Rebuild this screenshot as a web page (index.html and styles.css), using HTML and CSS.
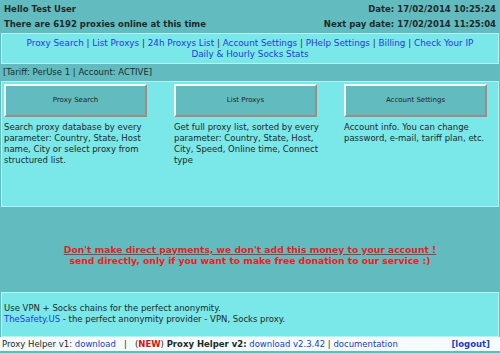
FILE: index.html
```html
<!DOCTYPE html>
<html lang="en">
<head>
    <meta charset="UTF-8">
    <title>Proxy Helper - Members Area</title>
    <link rel="stylesheet" href="styles.css">
</head>
<body>
    <div class="top">
        <div class="top-row">
            <b>Hello Test User</b>
            <b>Date: 17/02/2014 10:25:24</b>
        </div>
        <div class="top-row">
            <b>There are 6192 proxies online at this time</b>
            <b>Next pay date: 17/02/2014 11:25:04</b>
        </div>
    </div>

    <!-- Menu -->
    <div class="box menu">
        <a href="#">Proxy Search</a> | <a href="#">List Proxys</a> | <a href="#">24h Proxys List</a> | <a href="#">Account Settings</a> | <a href="#">PHelp Settings</a> | <a href="#">Billing</a> | <a href="#">Check Your IP</a><br>
        <a href="#">Daily &amp; Hourly Socks Stats</a>
    </div>

    <div class="tariff">[Tariff: PerUse 1 | Account: ACTIVE]</div>

    <!-- Main tools -->
    <div class="box tools">
        <div class="tool">
            <button class="tool-btn">Proxy Search</button>
            <p>Search proxy database by every parameter: Country, State, Host name, City or select proxy from structured list.</p>
        </div>
        <div class="tool">
            <button class="tool-btn">List Proxys</button>
            <p>Get full proxy list, sorted by every parameter: Country, State, Host, City, Speed, Online time, Connect type</p>
        </div>
        <div class="tool">
            <button class="tool-btn">Account Settings</button>
            <p>Account info. You can change password, e-mail, tariff plan, etc.</p>
        </div>
    </div>

    <div class="notice">
        <u>Don't make direct payments, we don't add this money to your account !</u><br>
        send directly, only if you want to make free donation to our service :)
    </div>

    <div class="box promo">
        Use VPN + Socks chains for the perfect anonymity.<br>
        <a href="#">TheSafety.US</a> - the perfect anonymity provider - VPN, Socks proxy.
    </div>

    <div class="footer">
        <div>
            Proxy Helper v1: <a href="#">download</a> &nbsp;&nbsp;|&nbsp;&nbsp; (<span class="new">NEW</span>) <b>Proxy Helper v2:</b> <a href="#">download v2.3.42</a> | <a href="#">documentation</a>
        </div>
        <a href="#" class="logout">[logout]</a>
    </div>
</body>
</html>
```

FILE: styles.css
```css
body {
    font-family: "DejaVu Sans", Verdana, sans-serif;
    font-size: 8.5px;
    line-height: 11.3px;
    color: #1e2a2a;
    margin: 0;
    padding: 0;
    background-color: #62bbbe;
}
a {
    color: #1f3cdc;
    text-decoration: none;
}
.top {
    padding: 2px 4px 1px 4px;
}
.top-row {
    display: flex;
    justify-content: space-between;
    line-height: 15px;
}
.box {
    background-color: #7ae7e8;
    border: 1px solid #b2f3f3;
    margin: 0 1px;
}
.menu {
    text-align: center;
    font-size: 8.8px;
    padding: 4px 0 2px 0;
    color: #333;
}
.tariff {
    padding: 0 3px;
    line-height: 17px;
}
.tools {
    display: grid;
    grid-template-columns: 143px 143px 143px;
    column-gap: 27px;
    padding: 2px 0 0 2px;
    height: 122px;
}
.tool p {
    margin: 5px 0 0 0;
    width: 146px;
}
.tool-btn {
    display: block;
    width: 143px;
    height: 33px;
    background-color: #62bbbe;
    border: 2px solid;
    border-color: #f4ffff #a48a80 #a48a80 #f4ffff;
    font-family: "DejaVu Sans", Verdana, sans-serif;
    font-size: 7px;
    color: #222;
    cursor: pointer;
}
.notice {
    height: 48px;
    padding: 37px 0 0 0;
    text-align: center;
    font-size: 9.2px;
    font-weight: bold;
    color: #ee1c1c;
}
.notice u {
    text-decoration-color: #9a4040;
}
.promo {
    padding: 10px 2px 11px 2px;
}
.footer {
    display: flex;
    justify-content: space-between;
    background-color: #f5fbfb;
    line-height: 14px;
    padding: 0 10px 0 2px;
}
.footer a {
    color: #1a3cc8;
}
.new {
    color: #e01010;
    font-weight: bold;
}
.logout {
    font-weight: bold;
}
```
